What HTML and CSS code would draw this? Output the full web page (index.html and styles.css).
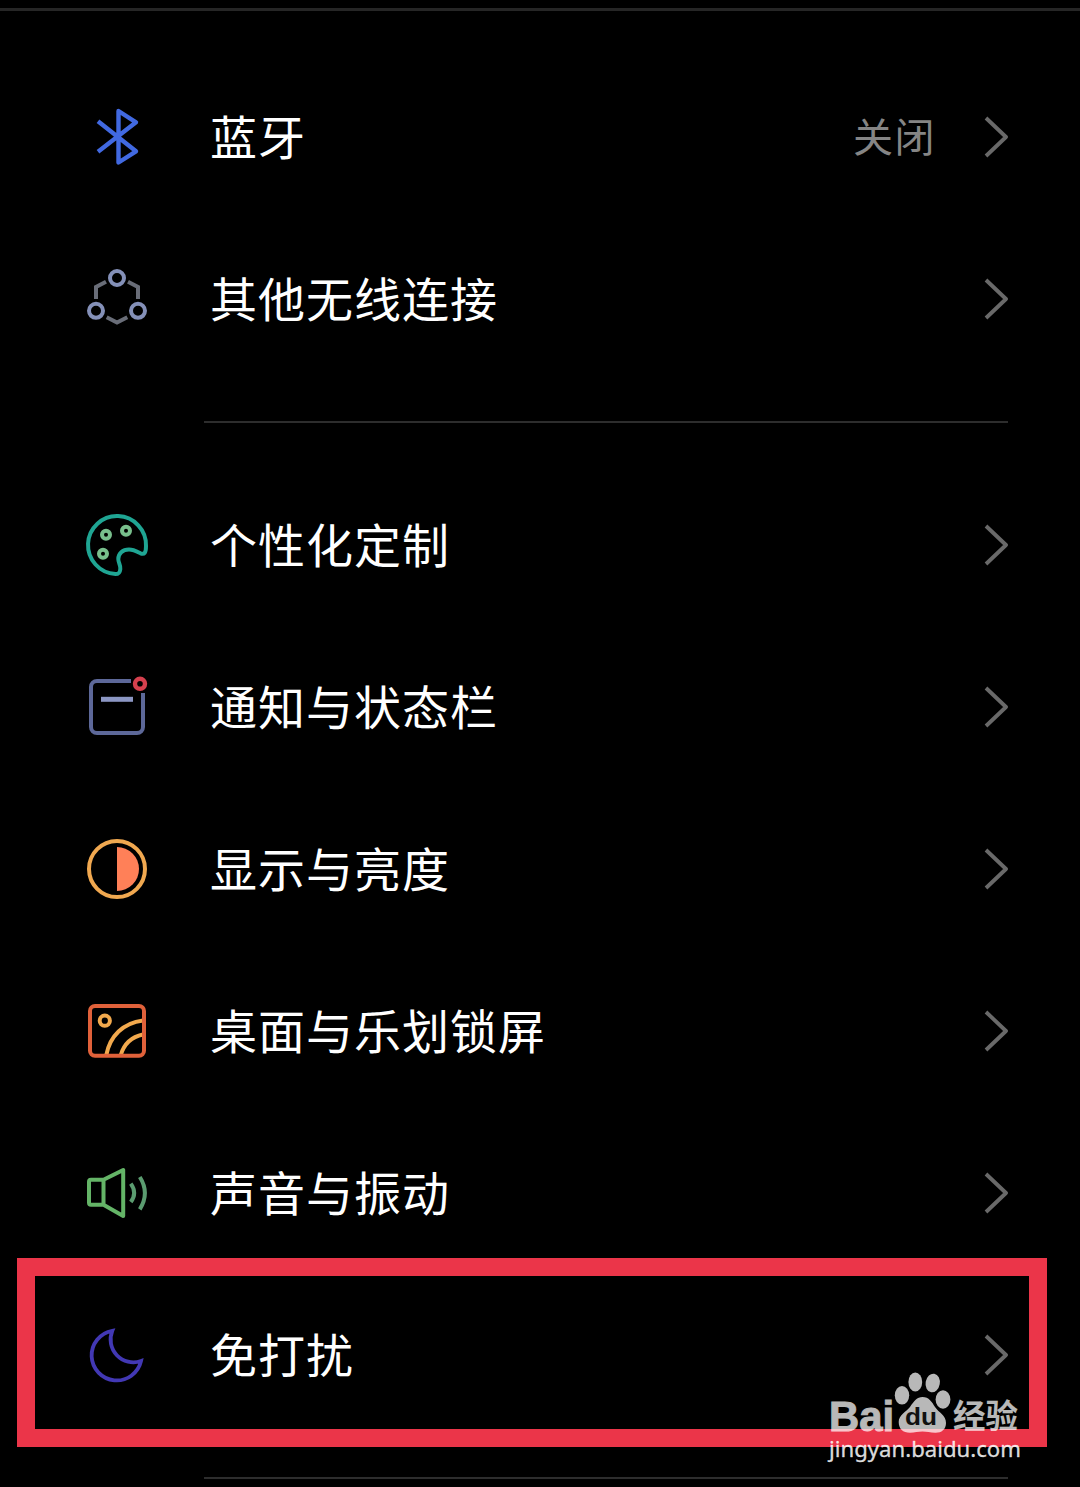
FILE: index.html
```html
<!DOCTYPE html>
<html lang="zh-CN">
<head>
    <meta charset="UTF-8">
    <meta name="viewport" content="width=device-width, initial-scale=1.0">
    <title>设置</title>
    <link rel="stylesheet" href="styles.css">
</head>
<body>
    <div class="top-line"></div>
    <ul class="list first">
        <li class="row">
            <svg class="icon" viewBox="0 0 64 64" stroke="#4169e1" stroke-width="4.4" stroke-linejoin="round">
                <path d="M13 16.3L51 46.3L33.5 57.5V6L51 17.3L13 46.7"/>
            </svg>
            <span class="label">蓝牙</span>
            <span class="value">关闭</span>
            <svg class="arrow" viewBox="0 0 24 44"><path d="M2 3L22 22L2 41"/></svg>
        </li>
        <li class="row">
            <svg class="icon" viewBox="0 0 64 64" stroke="#8490b8" stroke-width="4">
                <circle cx="32" cy="11" r="7"/>
                <circle cx="11" cy="43.8" r="7"/>
                <circle cx="53" cy="43.8" r="7"/>
                <path stroke="#696d78" d="M21 14.7L11 20V32M43 14.7L53 20V32M21.7 50.3L32 55.5L42.3 50.3"/>
            </svg>
            <span class="label">其他无线连接</span>
            <svg class="arrow" viewBox="0 0 24 44"><path d="M2 3L22 22L2 41"/></svg>
        </li>
    </ul>
    <div class="divider"></div>
    <ul class="list">
        <li class="row">
            <svg class="icon" viewBox="0 0 64 64" stroke="#1fa593" stroke-width="4">
                <path d="M30.5 61A29 29 0 1 1 61 33C61 39.5 59.5 42 55.5 40.3C51 38 48.5 36.5 44 36.5C37.5 36.5 33.3 40.5 33.3 46C33.3 50 35.6 51.5 35.3 56C35 59.5 34 61 30.5 61Z"/>
                <g stroke="#78bf8c">
                    <circle cx="21" cy="21.7" r="4"/>
                    <circle cx="41" cy="17.7" r="4"/>
                    <circle cx="18" cy="40.7" r="4"/>
                </g>
            </svg>
            <span class="label">个性化定制</span>
            <svg class="arrow" viewBox="0 0 24 44"><path d="M2 3L22 22L2 41"/></svg>
        </li>
        <li class="row">
            <svg class="icon" viewBox="0 0 64 64" stroke="#5d6899" stroke-width="4">
                <path d="M46 6H12A6 6 0 0 0 6 12V52A6 6 0 0 0 12 58H52A6 6 0 0 0 58 52V18"/>
                <path stroke="#8c97c4" stroke-width="5" d="M16 24.3H48"/>
                <circle stroke="#d5404e" stroke-width="4.4" cx="55" cy="8.8" r="5"/>
            </svg>
            <span class="label">通知与状态栏</span>
            <svg class="arrow" viewBox="0 0 24 44"><path d="M2 3L22 22L2 41"/></svg>
        </li>
        <li class="row">
            <svg class="icon" viewBox="0 0 64 64" stroke="#f0a850" stroke-width="4">
                <circle cx="32" cy="32" r="28"/>
                <path fill="#ff8058" stroke="none" d="M32 10A22 22 0 0 1 32 54Z"/>
            </svg>
            <span class="label">显示与亮度</span>
            <svg class="arrow" viewBox="0 0 24 44"><path d="M2 3L22 22L2 41"/></svg>
        </li>
        <li class="row">
            <svg class="icon" viewBox="0 0 64 64" stroke="#f2a94d" stroke-width="4">
                <circle cx="19.8" cy="21.7" r="5.1"/>
                <path d="M21.3 56C25 37 38 24 58 21.5M35.8 56C39 45 46 38 58 35.5"/>
                <rect stroke="#e0613a" x="5" y="7" width="54" height="49.7" rx="5"/>
            </svg>
            <span class="label">桌面与乐划锁屏</span>
            <svg class="arrow" viewBox="0 0 24 44"><path d="M2 3L22 22L2 41"/></svg>
        </li>
        <li class="row">
            <svg class="icon" viewBox="0 0 64 64" stroke="#64b467" stroke-width="4" stroke-linejoin="round">
                <path d="M18.5 18.8H6A2 2 0 0 0 4 20.8V41.8A2 2 0 0 0 6 43.8H18.5ZM18.5 18.8L38.2 9V55L18.5 43.8"/>
                <path stroke="#5b9c70" d="M45.8 22.7Q52.5 32 45.8 41M54.8 16Q65 32 54.8 48.4"/>
            </svg>
            <span class="label">声音与振动</span>
            <svg class="arrow" viewBox="0 0 24 44"><path d="M2 3L22 22L2 41"/></svg>
        </li>
        <li class="row">
            <svg class="icon" viewBox="0 0 64 64" stroke="#4238b4" stroke-width="3.8" stroke-miterlimit="10">
                <path d="M27.3 7.8A25 25 0 1 0 56 38A22.8 22.8 0 0 1 27.3 7.8Z"/>
            </svg>
            <span class="label">免打扰</span>
            <svg class="arrow" viewBox="0 0 24 44"><path d="M2 3L22 22L2 41"/></svg>
        </li>
    </ul>
    <div class="divider"></div>

    <div class="highlight"></div>
    <svg class="watermark" viewBox="0 0 210 105">
        <g class="logo">
            <text class="brand" x="9" y="66" textLength="65" lengthAdjust="spacingAndGlyphs">Bai</text>
            <ellipse cx="82" cy="30.3" rx="7.2" ry="9.3"/>
            <ellipse cx="95.3" cy="17" rx="6.9" ry="9.5"/>
            <ellipse cx="112.7" cy="18" rx="7.1" ry="9.4" transform="rotate(10 112.7 18)"/>
            <ellipse cx="123" cy="34.5" rx="7.4" ry="9.2"/>
            <path d="M102.5 32C109 32 112 37 115 42C119 48 126 50 126 58C126 65 121 68 115 67.7C110 67.5 107 66.5 102.5 66.5C98 66.5 95 67.7 90 67.7C83 67.7 78.7 64 78.7 57C78.7 50 86 47 90 42C94 36 97 32 102.5 32Z"/>
            <text class="cn" x="133" y="63" textLength="65" lengthAdjust="spacingAndGlyphs">经验</text>
        </g>
        <text class="du" x="85" y="60" textLength="32" lengthAdjust="spacingAndGlyphs">du</text>
        <text class="url" x="9" y="92" textLength="192" lengthAdjust="spacingAndGlyphs">jingyan.baidu.com</text>
    </svg>
</body>
</html>
```
FILE: styles.css
```css
body {
    margin: 0;
    padding: 8px 0 0;
    height: 1479px;
    position: relative;
    overflow: hidden;
    background: #000;
    color: #fff;
    font-family: "Noto Sans CJK SC", sans-serif;
}
.top-line {
    height: 3px;
    background: #262626;
}
.list {
    list-style: none;
    margin: 0;
    padding: 41px 72px 41px 85px;
}
.first {
    padding-top: 45px;
}
.row {
    display: flex;
    align-items: center;
    height: 162px;
}
.icon {
    width: 64px;
    height: 64px;
    fill: none;
}
.label {
    flex: 1;
    margin-left: 61px;
    padding-bottom: 4px;
    font-size: 47px;
    letter-spacing: 1px;
    line-height: 70px;
}
.value {
    margin-right: 48px;
    padding-bottom: 4px;
    font-size: 40px;
    letter-spacing: 1.5px;
    line-height: 60px;
    color: #858585;
}
.arrow {
    width: 24px;
    height: 44px;
    fill: none;
    stroke: #696969;
    stroke-width: 3.8;
    stroke-linejoin: round;
}
.divider {
    height: 2px;
    margin: 0 72px 0 204px;
    background: #2d2d2d;
}
.highlight {
    position: absolute;
    left: 17px;
    top: 1258px;
    width: 994px;
    height: 153px;
    border: 18px solid #eb3549;
}
.watermark {
    position: absolute;
    left: 820px;
    top: 1365px;
    width: 210px;
    height: 105px;
    fill: #fff;
}
.logo {
    opacity: 0.72;
}
.brand {
    font: bold 43px "Liberation Sans", sans-serif;
    stroke: #fff;
    stroke-width: 1px;
}
.du {
    font: bold 24px "Liberation Sans", sans-serif;
    fill: #111;
}
.cn {
    font: bold 33px "Noto Sans CJK SC", sans-serif;
}
.url {
    font: 22px "Noto Sans", sans-serif;
    fill-opacity: 0.85;
    stroke: #fff;
    stroke-width: 0.4px;
    stroke-opacity: 0.6;
}
```
